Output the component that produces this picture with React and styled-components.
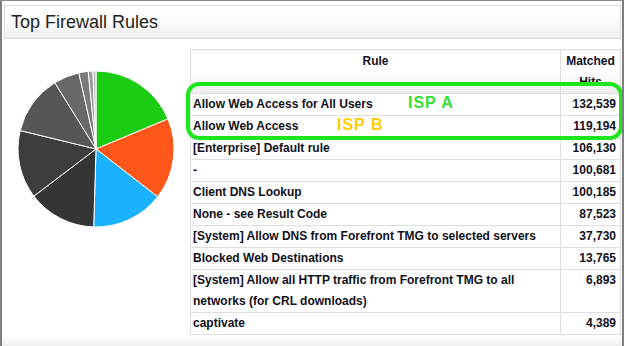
import React from "react";
import styled, { createGlobalStyle } from "styled-components";

const GlobalStyle = createGlobalStyle`
  html, body {
    margin: 0;
    padding: 0;
    background: #ffffff;
  }
  body {
    font-family: "Liberation Sans", Arial, sans-serif;
  }
`;

const rules = [
  { name: "Allow Web Access for All Users", hits: 132539 },
  { name: "Allow Web Access", hits: 119194 },
  { name: "[Enterprise] Default rule", hits: 106130 },
  { name: "-", hits: 100681 },
  { name: "Client DNS Lookup", hits: 100185 },
  { name: "None - see Result Code", hits: 87523 },
  { name: "[System] Allow DNS from Forefront TMG to selected servers", hits: 37730 },
  { name: "Blocked Web Destinations", hits: 13765 },
  {
    name: "[System] Allow all HTTP traffic from Forefront TMG to all networks (for CRL downloads)",
    hits: 6893,
  },
  { name: "captivate", hits: 4389 },
];

const sliceColors = [
  "#1acc12",
  "#ff5719",
  "#1ab2ff",
  "#353535",
  "#3d3d3d",
  "#565656",
  "#686868",
  "#7a7a7a",
  "#9a9a9a",
  "#bdbdbd",
];

const Pie = ({ data, size = 160, r = 78 }) => {
  const total = data.reduce((s, d) => s + d.hits, 0);
  const c = size / 2;
  let acc = 0;
  const point = (a) => [c + r * Math.sin(a), c - r * Math.cos(a)];
  return (
    <svg width={size} height={size} viewBox={`0 0 ${size} ${size}`}>
      {data.map((d, i) => {
        const a0 = (acc / total) * Math.PI * 2;
        acc += d.hits;
        const a1 = (acc / total) * Math.PI * 2;
        const [x0, y0] = point(a0);
        const [x1, y1] = point(a1);
        const large = a1 - a0 > Math.PI ? 1 : 0;
        return (
          <path
            key={i}
            d={`M${c},${c} L${x0},${y0} A${r},${r} 0 ${large} 1 ${x1},${y1} Z`}
            fill={sliceColors[i]}
            stroke="#ffffff"
            strokeWidth="1"
            strokeLinejoin="round"
          />
        );
      })}
    </svg>
  );
};

const TopFirewallRules = () => {
  return (
    <Panel>
      <TitleBar>Top Firewall Rules</TitleBar>
      <Body>
        <ChartCol>
          <Pie data={rules} />
        </ChartCol>
        <TableWrap>
          <Table>
            <thead>
              <tr>
                <HeadCell>
                  <HeadInner>Rule</HeadInner>
                </HeadCell>
                <HeadCell $narrow>
                  <HeadInner>
                    Matched
                    <br />
                    Hits
                  </HeadInner>
                </HeadCell>
              </tr>
            </thead>
            <tbody>
              {rules.map((r) => (
                <tr key={r.name}>
                  <NameCell>{r.name}</NameCell>
                  <HitsCell>{r.hits.toLocaleString("en-US")}</HitsCell>
                </tr>
              ))}
            </tbody>
          </Table>
          <Highlight />
          <IspLabel $color="#33e033" $left={218} $top={44}>
            ISP A
          </IspLabel>
          <IspLabel $color="#ffcc00" $left={147} $top={66}>
            ISP B
          </IspLabel>
        </TableWrap>
      </Body>
    </Panel>
  );
};

export default function App() {
  return (
    <>
      <GlobalStyle />
      <TopFirewallRules />
    </>
  );
}

const Panel = styled.div`
  box-sizing: border-box;
  width: 624px;
  height: 346px;
  border-top: 1px solid #8a8a8a;
  border-left: 2px solid #7f7f7f;
  border-right: 2px solid #7f7f7f;
  padding: 4px 1px 0 2px;
  background: linear-gradient(
    to bottom,
    #ffffff 0,
    #ffffff 334px,
    #eeeeee 346px
  );
  overflow: hidden;
`;

const TitleBar = styled.div`
  box-sizing: border-box;
  height: 34px;
  border: 1px solid #dcdcdc;
  padding: 4px 0 0 6px;
  font-size: 18px;
  line-height: 24px;
  color: #222222;
  background: linear-gradient(
    to bottom,
    #ffffff 0,
    #fdfdfd 40%,
    #efefef 100%
  );
`;

const Body = styled.div`
  display: flex;
  padding-top: 10px;
`;

const ChartCol = styled.div`
  width: 186px;
  flex: none;
  padding: 20px 0 0 12px;
  box-sizing: border-box;
`;

const TableWrap = styled.div`
  position: relative;
  width: 432px;
`;

const Table = styled.table`
  width: 431px;
  table-layout: fixed;
  border-collapse: collapse;
  border: 1px solid #dedede;
  font-size: 12px;
  font-weight: bold;
  color: #10101a;
`;

const HeadCell = styled.th`
  padding: 0 2px;
  vertical-align: top;
  text-align: center;
  font-weight: bold;
  width: ${(p) => (p.$narrow ? "55px" : "auto")};
  border: 1px solid #dedede;
  background: linear-gradient(
    to bottom,
    #ffffff 0,
    #ffffff 50%,
    #ececec 100%
  );
`;

const HeadInner = styled.div`
  box-sizing: border-box;
  height: 43px;
  padding-top: 1px;
  line-height: 21px;
  overflow: hidden;
`;

const NameCell = styled.td`
  padding: 0 2px;
  height: 21px;
  line-height: 21px;
  border: 1px solid #dedede;
  text-align: left;
`;

const HitsCell = styled.td`
  padding: 0 4px 0 3px;
  height: 21px;
  line-height: 21px;
  border: 1px solid #dedede;
  text-align: right;
  vertical-align: top;
`;

const Highlight = styled.div`
  position: absolute;
  left: -4px;
  top: 33px;
  width: 437px;
  height: 58px;
  box-sizing: border-box;
  border: 4px solid #1de61d;
  border-radius: 13px;
  pointer-events: none;
`;

const IspLabel = styled.div`
  position: absolute;
  left: ${(p) => p.$left}px;
  top: ${(p) => p.$top}px;
  font-size: 16px;
  font-weight: bold;
  letter-spacing: 1px;
  color: ${(p) => p.$color};
  line-height: 20px;
`;
